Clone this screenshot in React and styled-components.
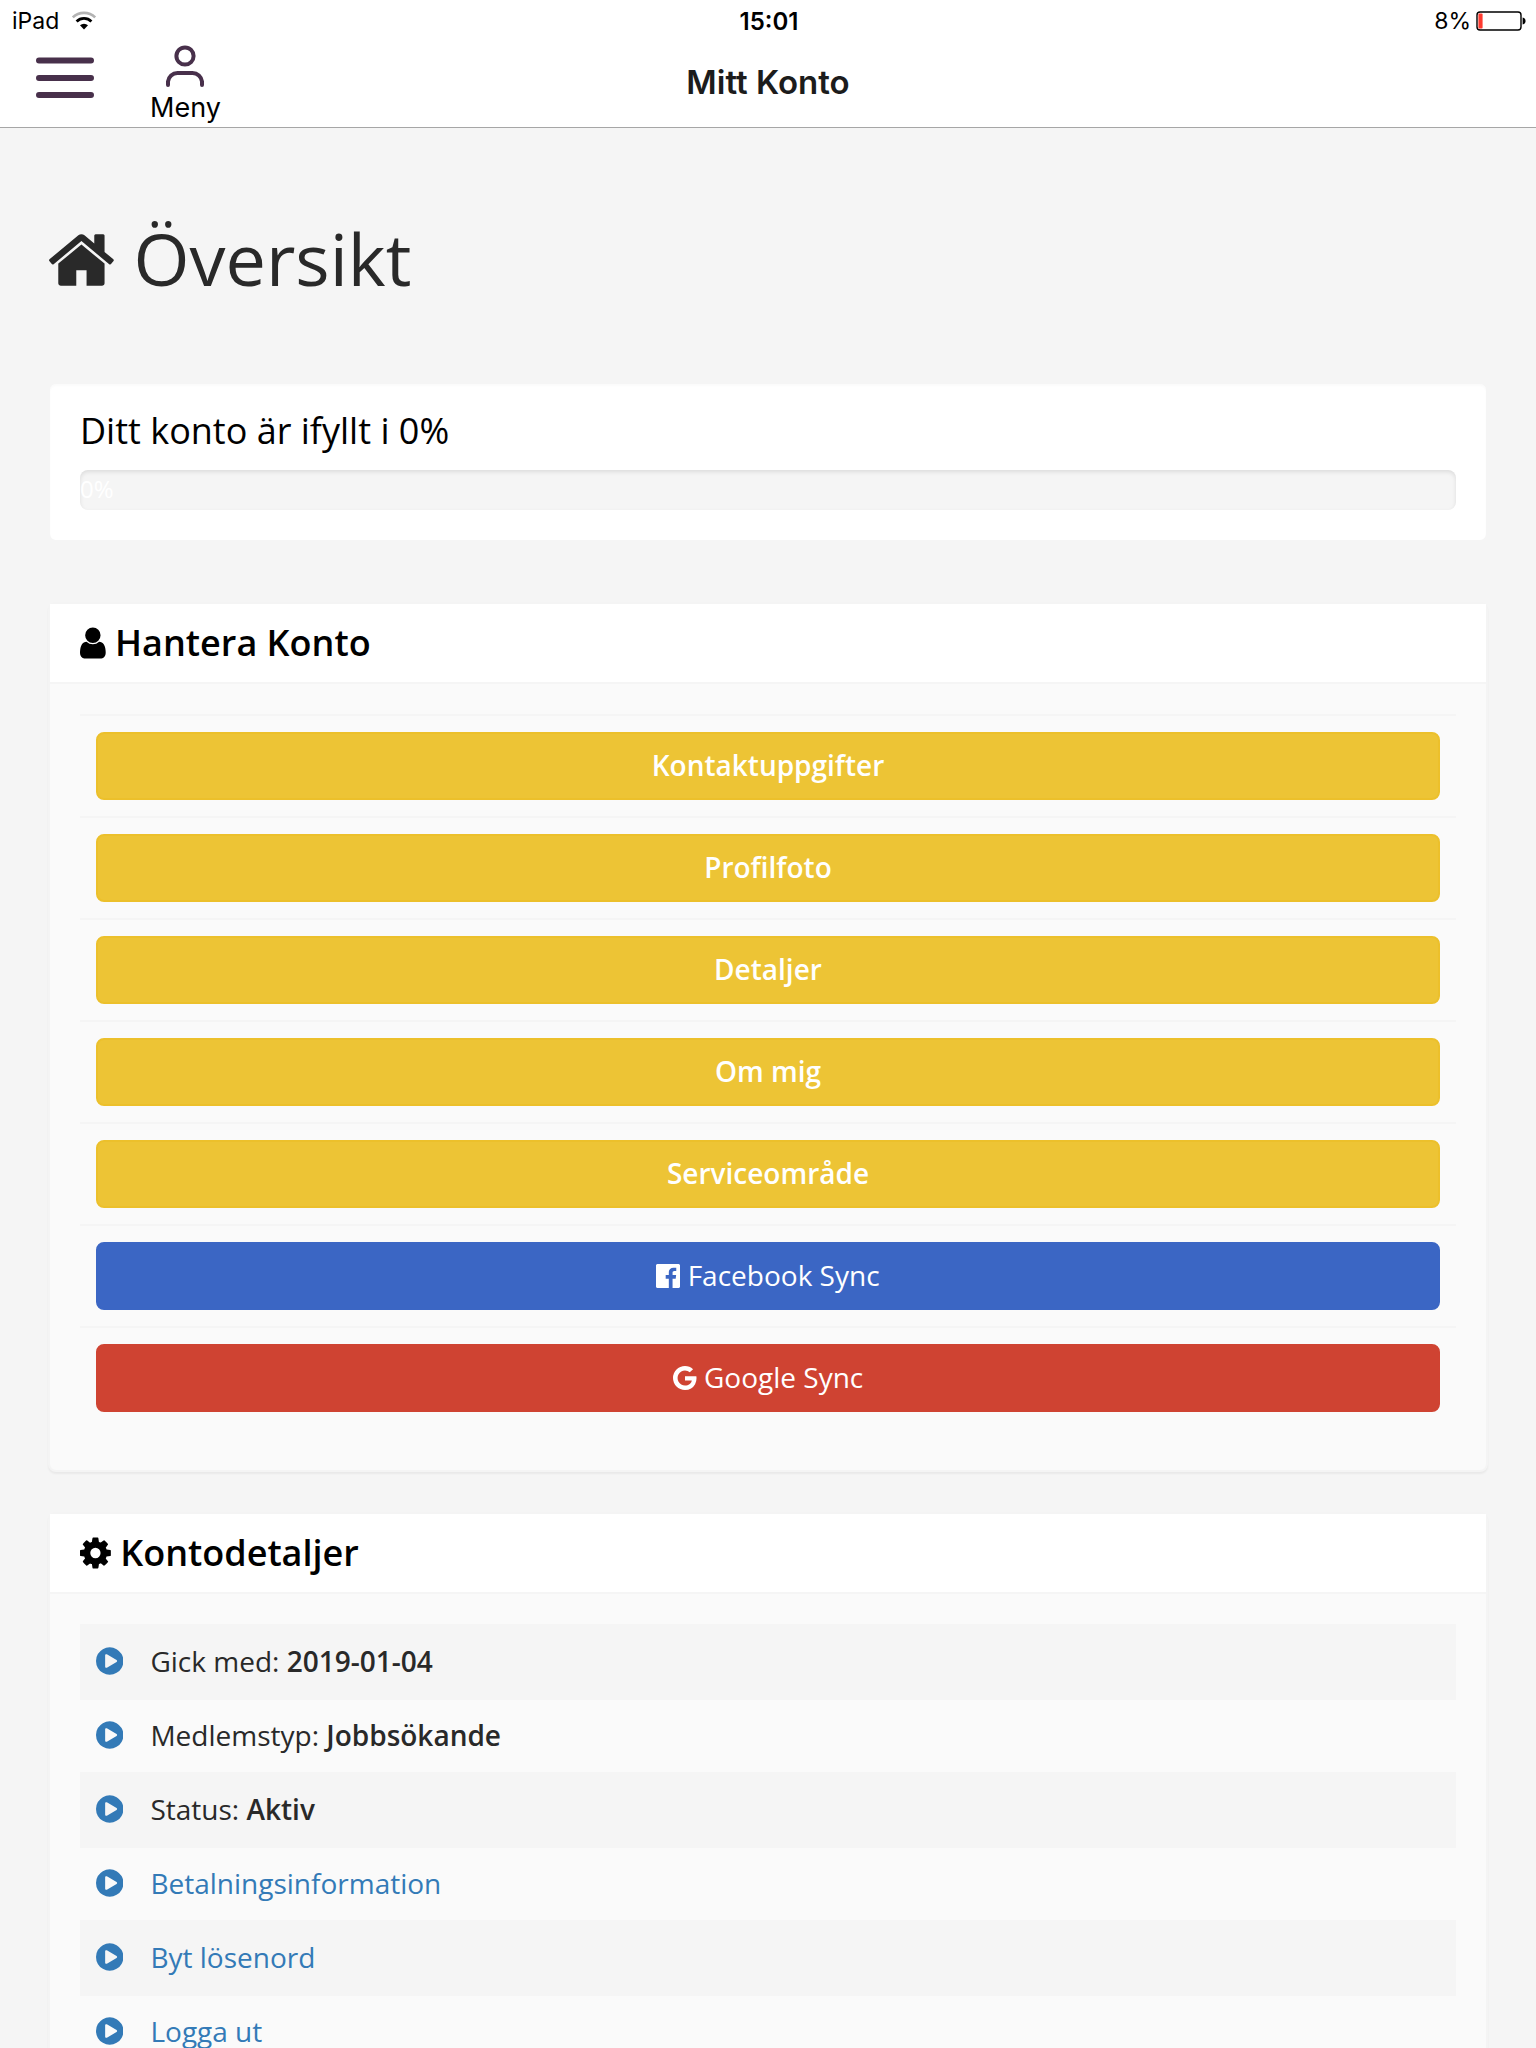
import React from "react";
import styled, { createGlobalStyle } from "styled-components";

const GlobalStyle = createGlobalStyle`
  * { box-sizing: border-box; }
  body {
    margin: 0;
    background: #f5f5f5;
    color: #292929;
    font-family: "Open Sans", "Noto Sans", sans-serif;
  }
  h1, h2, h3, p, ul { margin: 0; padding: 0; }
  ul { list-style: none; }
`;

const Screen = styled.div`
  display: flex;
  flex-direction: column;
  height: 100vh;
`;

const TopBar = styled.header`
  flex: none;
  background: #fff;
  border-bottom: 1px solid #a6a6a6;
  font-family: Inter, Roboto, sans-serif;
  color: #000;
`;

const StatusBar = styled.div`
  display: grid;
  grid-template-columns: 1fr auto 1fr;
  align-items: center;
  height: 40px;
  padding: 2px 10px 0 12px;
  font-size: 23px;
`;

const StatusGroup = styled.div`
  display: flex;
  align-items: center;
  justify-content: ${(p) => (p.$end ? "flex-end" : "flex-start")};
  gap: ${(p) => (p.$end ? 5 : 12)}px;
`;

const Clock = styled.time`
  font-size: 24px;
  font-weight: 600;
`;

const NavBar = styled.nav`
  display: grid;
  grid-template-columns: 1fr auto 1fr;
  align-items: start;
  min-height: 87px;
  padding: 0 36px;
`;

const NavActions = styled.div`
  display: flex;
  align-items: flex-start;
  gap: 56px;
`;

const NavButton = styled.button`
  display: flex;
  flex-direction: column;
  align-items: center;
  gap: 2px;
  padding: ${(p) => (p.$labelled ? 5 : 16)}px 0 0;
  border: 0;
  background: none;
  color: #000;
  font: 400 27px/38px Inter, Roboto, sans-serif;
  cursor: pointer;

  svg { display: block; }
`;

const NavTitle = styled.h1`
  padding-top: 22px;
  color: #1c1c1c;
  font-size: 33px;
  line-height: 40px;
  font-weight: 600;
`;

const Content = styled.main`
  flex: 1;
  min-height: 0;
  padding: 90px 48px 0;
  overflow-y: auto;
  scrollbar-width: none;
`;

const PageTitle = styled.h2`
  margin-bottom: 84px;
  font-size: 72px;
  line-height: 80px;
  font-weight: 400;
`;

const Glyph = styled.svg`
  display: inline-block;
  height: 1em;
  fill: currentColor;
  vertical-align: -0.143em;
`;

const CompletionCard = styled.section`
  margin-bottom: 60px;
  padding: 27px 30px 30px;
  border: 2px solid #f5f5f5;
  border-radius: 8px;
  background: #fff;
  box-shadow: inset 0 2px 2px rgba(0, 0, 0, 0.02);
`;

const CompletionText = styled.h3`
  margin-bottom: 19px;
  color: #000;
  font-size: 36px;
  line-height: 40px;
  font-weight: 400;
`;

const Track = styled.div`
  height: 40px;
  border-radius: 8px;
  background: #f5f5f5;
  box-shadow: inset 0 2px 4px rgba(0, 0, 0, 0.1);
`;

const Bar = styled.div`
  height: 100%;
  color: #fff;
  font-size: 24px;
  line-height: 38px;
`;

const Panel = styled.section`
  margin-bottom: 40px;
  border: 2px solid #f4f4f4;
  border-radius: 8px;
  background: #fafafa;
  box-shadow: 0 2px 2px rgba(0, 0, 0, 0.05);
`;

const PanelTitle = styled.h3`
  padding: 19px 30px;
  background: #fff;
  border-bottom: 2px solid #f5f5f5;
  color: #000;
  font-size: 36px;
  line-height: 40px;
  font-weight: 600;
`;

const PanelBody = styled.div`
  padding: 30px 30px 42px;
`;

const ActionItem = styled.li`
  padding: 16px;
  border-top: 2px solid #f5f5f5;
`;

const tones = {
  yellow: ["#edc435", "#ecc02b", 600],
  blue: ["#3b66c4", "#3b66c4", 400],
  red: ["#cf4332", "#cf4332", 400],
};

const ActionButton = styled.button`
  display: block;
  width: 100%;
  padding: 11px 24px 13px;
  border: 2px solid ${(p) => tones[p.$tone][1]};
  border-radius: 8px;
  background: ${(p) => tones[p.$tone][0]};
  color: #fff;
  font-family: inherit;
  font-size: 28px;
  line-height: 40px;
  font-weight: ${(p) => tones[p.$tone][2]};
  cursor: pointer;
`;

const DetailItem = styled.li`
  display: flex;
  align-items: center;
  gap: 27px;
  padding: 15px 16px 17px;
  border-top: 2px solid transparent;
  font-size: 28px;
  line-height: 40px;

  border-top-color: #f5f5f5;

  &:nth-child(odd) { background: #f5f5f5; }

  strong { font-weight: 600; }
`;

const Bullet = styled.span`
  display: flex;
  color: #337ab7;
  font-size: 32px;
`;

const DetailLink = styled.a`
  color: #337ab7;
  text-decoration: none;
`;

const glyphs = {
  home: [64, 1664, "M1472 992v480q0 26-19 45t-45 19h-384v-384h-256v384h-384q-26 0-45-19t-19-45v-480q0-1 .5-3t.5-3l575-474 575 474q1 2 1 6zm223-69l-62 74q-8 9-21 11h-3q-13 0-21-7l-692-577-692 577q-12 8-24 7-13-2-21-11l-62-74q-8-10-7-23.5t11-21.5l719-599q32-26 76-26t76 26l244 204v-195q0-14 9-23t23-9h192q14 0 23 9t9 23v408l219 182q10 8 11 21.5t-7 23.5z"],
  user: [256, 1280, "M1536 1399q0 109-62.5 187t-150.5 78h-854q-88 0-150.5-78t-62.5-187q0-85 8.5-160.5t31.5-152 58.5-131 94-89 134.5-34.5q131 128 313 128t313-128q76 0 134.5 34.5t94 89 58.5 131 31.5 152 8.5 160.5zm-256-887q0 159-112.5 271.5t-271.5 112.5-271.5-112.5-112.5-271.5 112.5-271.5 271.5-112.5 271.5 112.5 112.5 271.5z"],
  cog: [128, 1536, "M1152 896q0-106-75-181t-181-75-181 75-75 181 75 181 181 75 181-75 75-181zm512-109v222q0 12-8 23t-20 13l-185 28q-19 54-39 91 35 50 107 138 10 12 10 25t-9 23q-27 37-99 108t-94 71q-12 0-26-9l-138-108q-44 23-91 38-16 136-29 186-7 28-36 28h-222q-14 0-24.5-8.5t-11.5-21.5l-28-184q-49-16-90-37l-141 107q-10 9-25 9-14 0-25-11-126-114-165-168-7-10-7-23 0-12 8-23 15-21 51-66.5t54-70.5q-27-50-41-99l-183-27q-13-2-21-12.5t-8-23.5v-222q0-12 8-23t19-13l186-28q14-46 39-92-40-57-107-138-10-12-10-24 0-10 9-23 26-36 98.5-107.5t94.5-71.5q13 0 26 10l138 107q44-23 91-38 16-136 29-186 7-28 36-28h222q14 0 24.5 8.5t11.5 21.5l28 184q49 16 90 37l142-107q9-9 24-9 13 0 25 10 129 119 165 170 7 8 7 22 0 12-8 23-15 21-51 66.5t-54 70.5q26 50 41 98l183 28q13 2 21 12.5t8 23.5z"],
  facebook: [128, 1536, "M1579 128q35 0 60 25t25 60v1366q0 35-25 60t-60 25h-391v-595h199l30-232h-229v-148q0-56 23.5-84t91.5-28l122-1v-207q-63-9-178-9-136 0-217.5 80t-81.5 226v171h-200v232h200v595h-735q-35 0-60-25t-25-60v-1366q0-35 25-60t60-25h1366z"],
  google: [128, 1536, "M896 786h725q12 67 12 128 0 217-91 387.5t-259.5 266.5-386.5 96q-157 0-299-60.5t-245-163.5-163.5-245-60.5-299 60.5-299 163.5-245 245-163.5 299-60.5q300 0 515 201l-209 201q-123-119-306-119-129 0-238.5 65t-173.5 176.5-64 243.5 64 243.5 173.5 176.5 238.5 65q87 0 160-24t120-60 82-82 51.5-87 22.5-78h-436v-264z"],
  play: [128, 1536, "M896 128q209 0 385.5 103t279.5 279.5 103 385.5-103 385.5-279.5 279.5-385.5 103-385.5-103-279.5-279.5-103-385.5 103-385.5 279.5-279.5 385.5-103zm384 823q32-18 32-55t-32-55l-544-320q-31-19-64-1-32 19-32 56v640q0 37 32 56 16 8 32 8 17 0 32-9z"],
};

function Icon({ name }) {
  const [left, width, d] = glyphs[name];
  return (
    <Glyph viewBox={`${left} 0 ${width} 1792`} aria-hidden="true">
      <path d={d} />
    </Glyph>
  );
}

function WifiIcon() {
  return (
    <svg width="26" height="20" viewBox="0 0 26 20" fill="none" aria-hidden="true">
      <path d="M1.8 6.4A16 16 0 0 1 24.2 6.4" stroke="#b3b3b3" strokeWidth="2.6" />
      <path d="M5.6 10.4A10.6 10.6 0 0 1 20.4 10.4" stroke="#000" strokeWidth="2.8" />
      <path d="M9 14.2A6 6 0 0 1 17 14.2L13 18.6Z" fill="#000" />
    </svg>
  );
}

function BatteryIcon() {
  return (
    <svg width="50" height="20" viewBox="0 0 50 20" aria-hidden="true">
      <rect x="1" y="1" width="44" height="18" rx="3" fill="none" stroke="#000" strokeWidth="1.4" />
      <rect x="2.4" y="2.4" width="4.2" height="15.2" rx="1" fill="#ff3b30" />
      <path d="M46.6 6.6Q49.6 7.2 49.6 10T46.6 13.4Z" fill="#000" />
    </svg>
  );
}

function BarsIcon() {
  return (
    <svg width="58" height="42" viewBox="0 0 58 42" stroke="#48304b" strokeWidth="6" strokeLinecap="round" aria-hidden="true">
      <path d="M3 4.5H55M3 22H55M3 39H55" />
    </svg>
  );
}

function PersonIcon() {
  return (
    <svg width="38" height="42" viewBox="0 0 38 42" fill="none" stroke="#48304b" strokeWidth="4" strokeLinecap="round" aria-hidden="true">
      <circle cx="19" cy="11" r="8.6" />
      <path d="M2 40V36.5A9.5 9.5 0 0 1 11.5 28H26.500A9.5 9.5 0 0 1 36 36.5V40" />
    </svg>
  );
}

const actions = [
  { label: "Kontaktuppgifter", tone: "yellow" },
  { label: "Profilfoto", tone: "yellow" },
  { label: "Detaljer", tone: "yellow" },
  { label: "Om mig", tone: "yellow" },
  { label: "Serviceområde", tone: "yellow" },
  { label: "Facebook Sync", tone: "blue", icon: "facebook" },
  { label: "Google Sync", tone: "red", icon: "google" },
];

const details = [
  { label: "Gick med:", value: "2019-01-04" },
  { label: "Medlemstyp:", value: "Jobbsökande" },
  { label: "Status:", value: "Aktiv" },
  { label: "Betalningsinformation", href: "#betalning" },
  { label: "Byt lösenord", href: "#losenord" },
  { label: "Logga ut", href: "#logga-ut" },
];

export default function App() {
  const completion = 0;
  return (
    <Screen>
      <GlobalStyle />
      <TopBar>
        <StatusBar>
          <StatusGroup>
            <span>iPad</span>
            <WifiIcon />
          </StatusGroup>
          <Clock>15:01</Clock>
          <StatusGroup $end>
            <span>8%</span>
            <BatteryIcon />
          </StatusGroup>
        </StatusBar>
        <NavBar>
          <NavActions>
            <NavButton type="button" aria-label="Navigation">
              <BarsIcon />
            </NavButton>
            <NavButton type="button" $labelled>
              <PersonIcon />
              Meny
            </NavButton>
          </NavActions>
          <NavTitle>Mitt Konto</NavTitle>
        </NavBar>
      </TopBar>
      <Content>
        <PageTitle>
          <Icon name="home" /> Översikt
        </PageTitle>
        <CompletionCard>
          <CompletionText id="completion">Ditt konto är ifyllt i {completion}%</CompletionText>
          <Track
            role="progressbar"
            aria-labelledby="completion"
            aria-valuemin={0}
            aria-valuemax={100}
            aria-valuenow={completion}
          >
            <Bar style={{ width: `${completion}%` }}>{completion}%</Bar>
          </Track>
        </CompletionCard>
        <Panel>
          <PanelTitle>
            <Icon name="user" /> Hantera Konto
          </PanelTitle>
          <PanelBody>
            <ul>
              {actions.map((a) => (
                <ActionItem key={a.label}>
                  <ActionButton type="button" $tone={a.tone}>
                    {a.icon && <Icon name={a.icon} />}
                    {a.icon && " "}
                    {a.label}
                  </ActionButton>
                </ActionItem>
              ))}
            </ul>
          </PanelBody>
        </Panel>
        <Panel>
          <PanelTitle>
            <Icon name="cog" /> Kontodetaljer
          </PanelTitle>
          <PanelBody>
            <ul>
              {details.map((d) => (
                <DetailItem key={d.label}>
                  <Bullet>
                    <Icon name="play" />
                  </Bullet>
                  {d.href ? (
                    <DetailLink href={d.href}>{d.label}</DetailLink>
                  ) : (
                    <span>
                      {d.label} <strong>{d.value}</strong>
                    </span>
                  )}
                </DetailItem>
              ))}
            </ul>
          </PanelBody>
        </Panel>
      </Content>
    </Screen>
  );
}
